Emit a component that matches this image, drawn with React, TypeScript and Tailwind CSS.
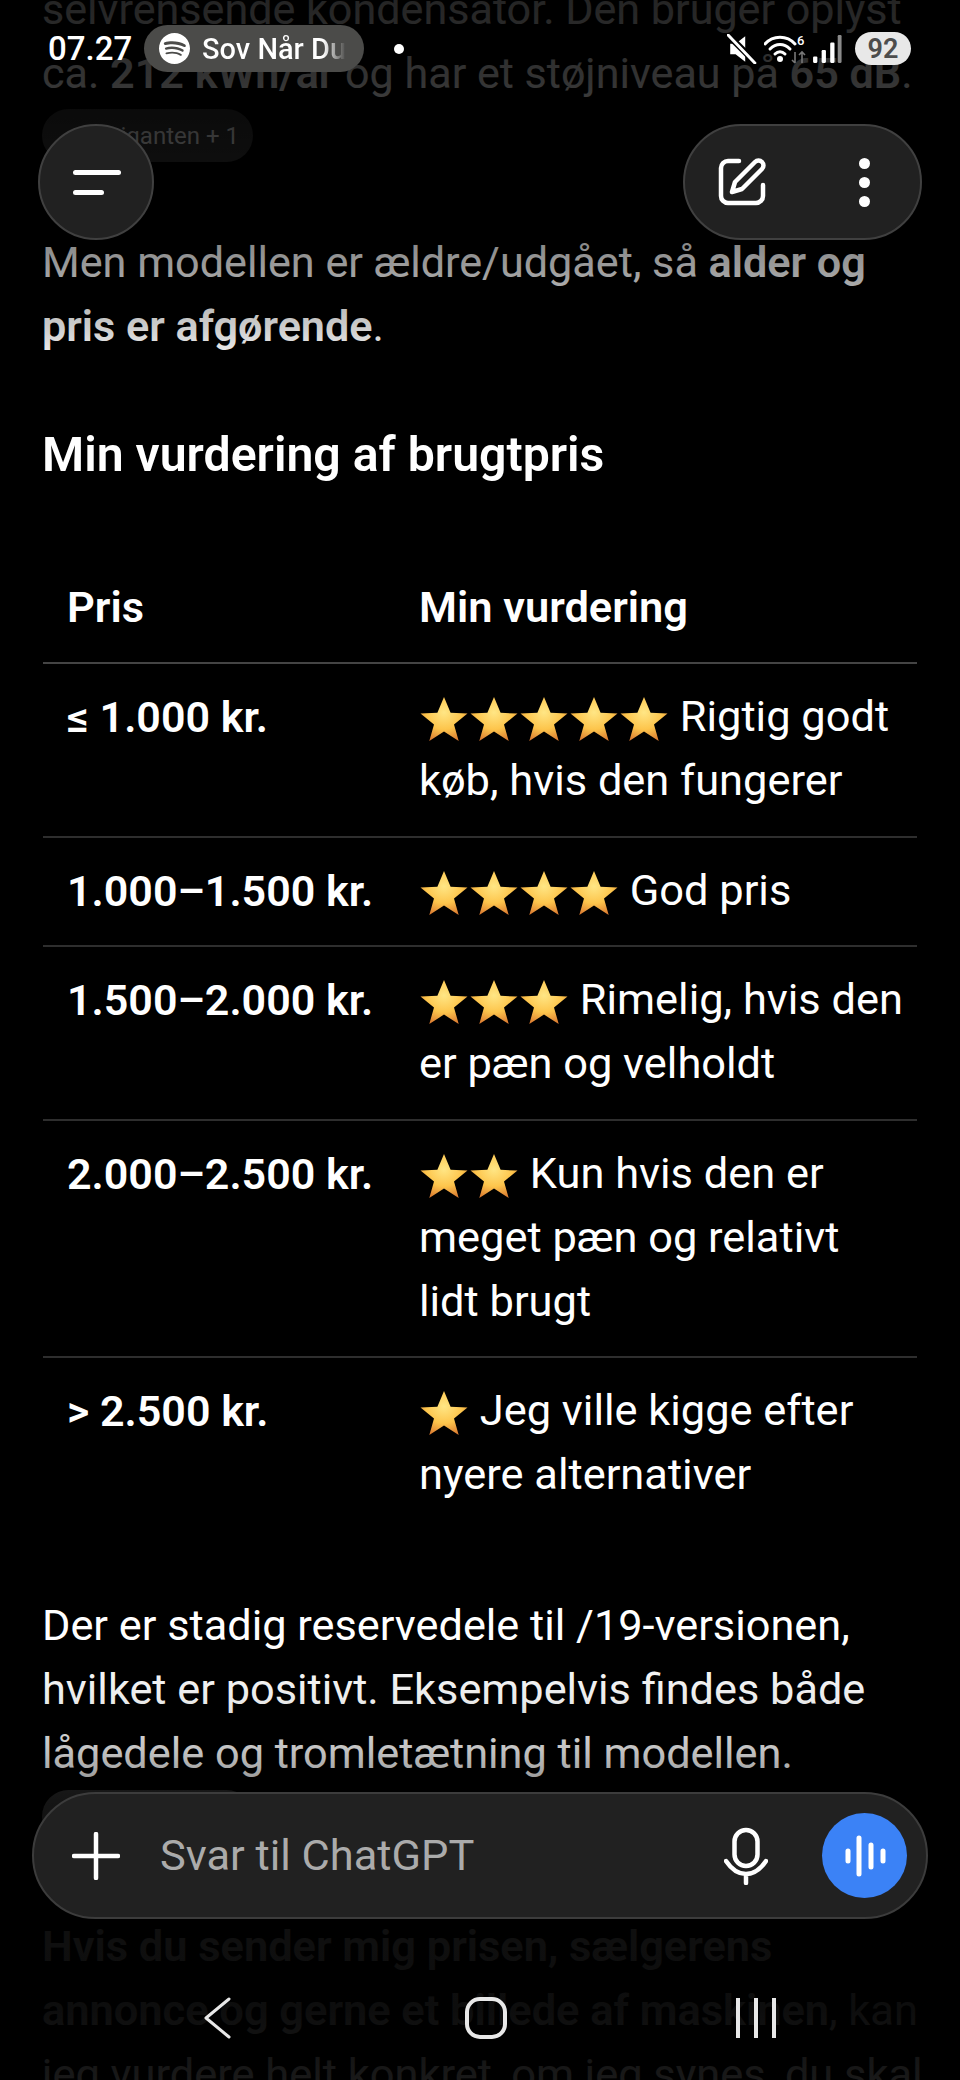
import { SiSpotify } from 'react-icons/si'

const font = { fontFamily: 'Roboto, sans-serif' }

function Stars({ count }: { count: number }) {
  return (
    <>
      {Array.from({ length: count }).map((_, i) => (
        <svg key={i} viewBox="0 0 50 46" className="inline-block h-[46px] w-[50px] align-[-11px]">
          <defs>
            <radialGradient id={`star-${count}-${i}`} cx="0.5" cy="0.35" r="0.7">
              <stop offset="0" stopColor="#ffe685" />
              <stop offset="0.55" stopColor="#fdc54c" />
              <stop offset="1" stopColor="#d9772f" />
            </radialGradient>
          </defs>
          <path
            d="M25 1l6.6 15.8L48.500 17.600 35 28.400l4.700 16.600L25 35.600 10.300 45 15 28.400 1.500 17.600l16.900-.8z"
            fill={`url(#star-${count}-${i})`}
          />
        </svg>
      ))}
    </>
  )
}

const rows = [
  { price: '≤ 1.000 kr.', stars: 5, text: 'Rigtig godt køb, hvis den fungerer' },
  { price: '1.000–1.500 kr.', stars: 4, text: 'God pris' },
  { price: '1.500–2.000 kr.', stars: 3, text: 'Rimelig, hvis den er pæn og velholdt' },
  { price: '2.000–2.500 kr.', stars: 2, text: 'Kun hvis den er meget pæn og relativt lidt brugt' },
  { price: '> 2.500 kr.', stars: 1, text: 'Jeg ville kigge efter nyere alternativer' },
]

function StatusBar() {
  return (
    <div className="absolute left-0 right-0 top-[25px] flex h-[47px] items-center pl-[48px] pr-[49px] text-white">
      <span className="w-[96px] text-[33px] font-medium">07.27</span>
      <div className="flex h-[47px] w-[220px] items-center gap-[12px] overflow-hidden rounded-full bg-[#4b4b49] pl-[15px]">
        <SiSpotify className="size-[31px] shrink-0 text-white" />
        <span className="bg-gradient-to-r from-white from-[84%] to-transparent bg-clip-text text-[29px] font-medium whitespace-nowrap text-transparent">
          Sov Når Du
        </span>
      </div>
      <div className="ml-[30px] size-[10px] rounded-full bg-white" />
      <div className="ml-auto flex items-center">
        <svg viewBox="0 0 28 28" className="h-[30px] w-[30px]">
          <path d="M3 9h5l9-7v24l-9-7H3z" fill="#fff" />
          <path d="M2 2l25 25" stroke="#000" strokeWidth="6" />
          <path d="M1 1l25 26" stroke="#fff" strokeWidth="2.800" strokeLinecap="round" />
        </svg>
        <svg viewBox="0 0 44 30" className="ml-[7px] h-[30px] w-[44px]">
          <g fill="none" stroke="#fff" strokeWidth="3" strokeLinecap="round">
            <path d="M1 10c8-9 22-9 30 0" />
            <path d="M6 15c6-6 14-6 20 0" />
            <path d="M11 20c3-3 7-3 10 0" />
          </g>
          <circle cx="16" cy="25" r="3" fill="#fff" />
          <text x="33" y="11" fill="#fff" fontSize="13" fontWeight="500" fontFamily="Roboto, sans-serif">6</text>
          <path d="M31 18v11m-3-3l3 3m7-11v11m-3-8l3-3 3 3" stroke="#777" strokeWidth="1.600" fill="none" />
        </svg>
        <svg viewBox="0 0 28 28" className="ml-[4px] h-[30px] w-[30px]">
          <rect x="1" y="21" width="4" height="6" rx="1" fill="#fff" />
          <rect x="9" y="15" width="4" height="12" rx="1" fill="#fff" />
          <rect x="17" y="8" width="4" height="19" rx="1" fill="#fff" />
          <rect x="24" y="1" width="3.600" height="26" rx="1" fill="#8a8a8a" />
        </svg>
        <div className="ml-[13px] flex h-[33px] w-[56px] items-center justify-center rounded-full bg-[#e8e8e8] text-[27px] font-semibold text-[#4d4d4d]">
          92
        </div>
      </div>
    </div>
  )
}

function TopButtons() {
  return (
    <div className="absolute left-[38px] right-[38px] top-[124px] flex justify-between">
      <div className="flex size-[116px] flex-col items-start justify-center gap-[15px] rounded-full border-2 border-[#404040] bg-[#212121] pl-[33px]">
        <div className="h-[5px] w-[48px] rounded-full bg-white" />
        <div className="h-[5px] w-[31px] rounded-full bg-white" />
      </div>
      <div className="flex h-[116px] w-[239px] items-center rounded-full border-2 border-[#404040] bg-[#212121] pl-[33px]">
        <svg viewBox="0 0 48 48" className="size-[48px]" fill="none" stroke="#fff" strokeWidth="4.500" strokeLinecap="round" strokeLinejoin="round">
          <path d="M21 3H10a7 7 0 0 0-7 7v28a7 7 0 0 0 7 7h28a7 7 0 0 0 7-7V27" />
          <path d="M14 34l3-10L37 4a4.600 4.600 0 0 1 7 7L24 31z" />
        </svg>
        <div className="ml-[93px] flex flex-col gap-[8px]">
          <div className="size-[11px] rounded-full bg-white" />
          <div className="size-[11px] rounded-full bg-white" />
          <div className="size-[11px] rounded-full bg-white" />
        </div>
      </div>
    </div>
  )
}

function Composer() {
  return (
    <div className="absolute left-[32px] right-[32px] top-[1792px] flex h-[127px] items-center rounded-full border-2 border-[#3c3c3c] bg-[#212121] pl-[38px] pr-[19px]">
      <svg viewBox="0 0 48 48" className="size-[48px] shrink-0" stroke="#fff" strokeWidth="4.500" strokeLinecap="round">
        <path d="M24 2v44M2 24h44" />
      </svg>
      <span className="ml-[40px] text-[43.400px] text-[#ababab]">Svar til ChatGPT</span>
      <svg viewBox="0 0 44 58" className="ml-auto h-[58px] w-[44px]" fill="none" stroke="#fff" strokeWidth="4.500" strokeLinecap="round">
        <rect x="10.500" y="3" width="23" height="36" rx="11.500" />
        <path d="M2 34c6 9 12 13 20 13s14-4 20-13M22 47v9" />
      </svg>
      <div className="ml-[54px] flex size-[85px] items-center justify-center rounded-full bg-[#3b82f6]">
        <svg viewBox="0 0 44 44" className="size-[44px]" stroke="#fff" strokeWidth="5" strokeLinecap="round">
          <path d="M5 17v10M16 4v36M28 11v22M40 17v10" />
        </svg>
      </div>
    </div>
  )
}

function NavBar() {
  return (
    <div className="absolute left-0 right-0 top-[1997px] flex h-[42px] items-center text-white">
      <svg viewBox="0 0 28 42" className="ml-[203px] h-[42px] w-[28px]" fill="none" stroke="#e8e8e8" strokeWidth="3" strokeLinecap="round" strokeLinejoin="round">
        <path d="M26 2L3 21l23 19" />
      </svg>
      <div className="ml-[234px] h-[42px] w-[42px] rounded-[15px] border-[4px] border-[#e8e8e8]" />
      <div className="ml-[229px] flex gap-[14px]">
        <div className="h-[40px] w-[4px] bg-[#e8e8e8]" />
        <div className="h-[40px] w-[4px] bg-[#e8e8e8]" />
        <div className="h-[40px] w-[4px] bg-[#e8e8e8]" />
      </div>
    </div>
  )
}

function SourceChip({ label }: { label: string }) {
  return (
    <div className="flex h-[53px] w-[211px] items-center justify-end rounded-full bg-[#2a2a2a] pr-[14px] text-[24px] text-[#bbb]">
      {label}
    </div>
  )
}

export default function App() {
  return (
    <div className="relative h-[2080px] w-[960px] overflow-hidden bg-black text-[43.400px] leading-[64px] text-white" style={font}>
      <div className="mt-[-22px] px-[42px]">
        <div className="text-[43.100px]">
          <p className="whitespace-nowrap">selvrensende kondensator. Den bruger oplyst</p>
          <p className="whitespace-nowrap">
            ca. <b className="font-semibold">212 kWh/år</b> og har et støjniveau på <b className="font-semibold">65 dB</b>.
          </p>
        </div>
        <div className="mt-[3px]">
          <SourceChip label="Elgiganten + 1" />
        </div>
        <p className="mt-[69px] text-[43.200px]">
          Men modellen er ældre/udgået, så <b className="font-semibold">alder og pris er afgørende</b>.
        </p>
        <h3 className="mt-[64px] text-[48.200px] font-semibold">Min vurdering af brugtpris</h3>
        <table className="ml-[1px] mt-[66px] w-[874px] border-collapse">
          <thead>
            <tr className="border-b-2 border-[#444] text-left">
              <th className="h-[110px] w-[376px] pl-[24px] font-semibold">Pris</th>
              <th className="font-semibold">Min vurdering</th>
            </tr>
          </thead>
          <tbody>
            {rows.map((row, i) => (
              <tr key={row.price} className={i < rows.length - 1 ? 'border-b-2 border-[#2e2e2e]' : ''}>
                <td className="pb-[22.500px] pl-[24px] pt-[21px] align-top text-[43px] font-semibold">{row.price}</td>
                <td className="pb-[22.500px] pr-[11px] pt-[21px] align-top">
                  <Stars count={row.stars} /> {row.text}
                </td>
              </tr>
            ))}
          </tbody>
        </table>
        <p className="mt-[64px] text-[43.300px]">
          Der er stadig reservedele til /19-versionen, hvilket er positivt. Eksempelvis findes både lågedele og
          tromletætning til modellen.
        </p>
        <div className="mt-[4px]">
          <SourceChip label="Elgiganten" />
        </div>
        <p className="mr-[-16px] mt-[72px]">
          <b className="font-semibold">Hvis du sender mig prisen, sælgerens annonce og gerne et billede af maskinen</b>, kan
          jeg vurdere helt konkret, om jeg synes, du skal
        </p>
      </div>
      <div className="absolute left-0 right-0 top-0 h-[380px] bg-[linear-gradient(to_bottom,rgba(0,0,0,0.86)_0px,rgba(0,0,0,0.8)_80px,rgba(0,0,0,0.6)_200px,rgba(0,0,0,0.4)_264px,rgba(0,0,0,0.2)_327px,rgba(0,0,0,0)_370px)]" />
      <div className="absolute bottom-0 left-0 right-0 h-[440px] bg-[linear-gradient(to_bottom,rgba(0,0,0,0)_0px,rgba(0,0,0,0.08)_60px,rgba(0,0,0,0.25)_113px,rgba(0,0,0,0.5)_160px,rgba(0,0,0,0.94)_290px,rgba(0,0,0,0.95)_370px,rgba(0,0,0,0.9)_440px)]" />
      <StatusBar />
      <TopButtons />
      <Composer />
      <NavBar />
    </div>
  )
}
